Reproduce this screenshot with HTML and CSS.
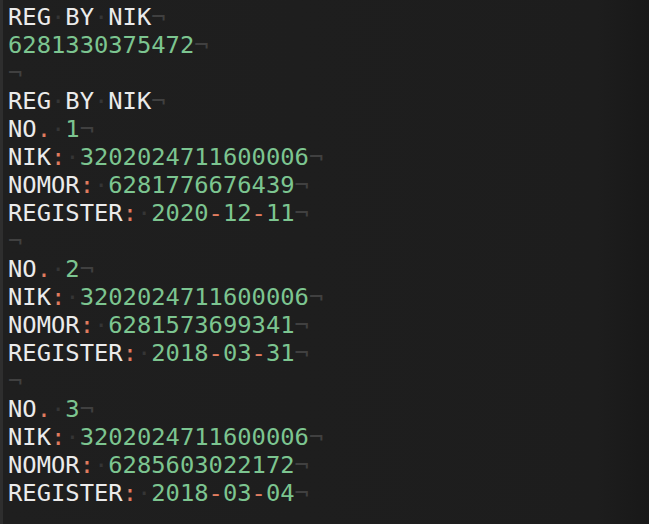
FILE: index.html
```html
<!DOCTYPE html>
<html>
<head>
<meta charset="utf-8">
<link rel="stylesheet" href="styles.css">
</head>
<body>
<div class="editor">
  <div class="gutter"></div>
  <div class="text">
    <div class="line">REG<span class="ws">·</span>BY<span class="ws">·</span>NIK<span class="eol">¬</span></div>
    <div class="line"><span class="num">6281330375472</span><span class="eol">¬</span></div>
    <div class="line"><span class="eol">¬</span></div>
    <div class="line">REG<span class="ws">·</span>BY<span class="ws">·</span>NIK<span class="eol">¬</span></div>
    <div class="line">NO<span class="p">.</span><span class="ws">·</span><span class="num">1</span><span class="eol">¬</span></div>
    <div class="line">NIK<span class="p">:</span><span class="ws">·</span><span class="num">3202024711600006</span><span class="eol">¬</span></div>
    <div class="line">NOMOR<span class="p">:</span><span class="ws">·</span><span class="num">6281776676439</span><span class="eol">¬</span></div>
    <div class="line">REGISTER<span class="p">:</span><span class="ws">·</span><span class="num">2020<span class="p">-</span>12<span class="p">-</span>11</span><span class="eol">¬</span></div>
    <div class="line"><span class="eol">¬</span></div>
    <div class="line">NO<span class="p">.</span><span class="ws">·</span><span class="num">2</span><span class="eol">¬</span></div>
    <div class="line">NIK<span class="p">:</span><span class="ws">·</span><span class="num">3202024711600006</span><span class="eol">¬</span></div>
    <div class="line">NOMOR<span class="p">:</span><span class="ws">·</span><span class="num">6281573699341</span><span class="eol">¬</span></div>
    <div class="line">REGISTER<span class="p">:</span><span class="ws">·</span><span class="num">2018<span class="p">-</span>03<span class="p">-</span>31</span><span class="eol">¬</span></div>
    <div class="line"><span class="eol">¬</span></div>
    <div class="line">NO<span class="p">.</span><span class="ws">·</span><span class="num">3</span><span class="eol">¬</span></div>
    <div class="line">NIK<span class="p">:</span><span class="ws">·</span><span class="num">3202024711600006</span><span class="eol">¬</span></div>
    <div class="line">NOMOR<span class="p">:</span><span class="ws">·</span><span class="num">6285603022172</span><span class="eol">¬</span></div>
    <div class="line">REGISTER<span class="p">:</span><span class="ws">·</span><span class="num">2018<span class="p">-</span>03<span class="p">-</span>04</span><span class="eol">¬</span></div>
  </div>
</div>
</body>
</html>
```

FILE: styles.css
```css
html, body {
  margin: 0;
  padding: 0;
  background: #1e1e1e;
  overflow: hidden;
}
.editor {
  display: flex;
  width: 649px;
  height: 524px;
  background: linear-gradient(to right, #1f1f1f 0%, #1d1d1d 92%, #181818 100%);
  overflow: hidden;
}
.gutter {
  width: 3px;
  flex: none;
  background: #2e2e2e;
}
.text {
  padding: 3px 0 0 5px;
  font-family: "DejaVu Sans Mono", monospace;
  font-size: 23.8px;
  line-height: 28px;
  color: #ebebeb;
}
.line {
  height: 28px;
  white-space: pre;
}
.num {
  color: #7cc590;
}
.p {
  color: #e07c5f;
}
.ws {
  color: #353535;
}
.eol {
  color: #404040;
}
```
